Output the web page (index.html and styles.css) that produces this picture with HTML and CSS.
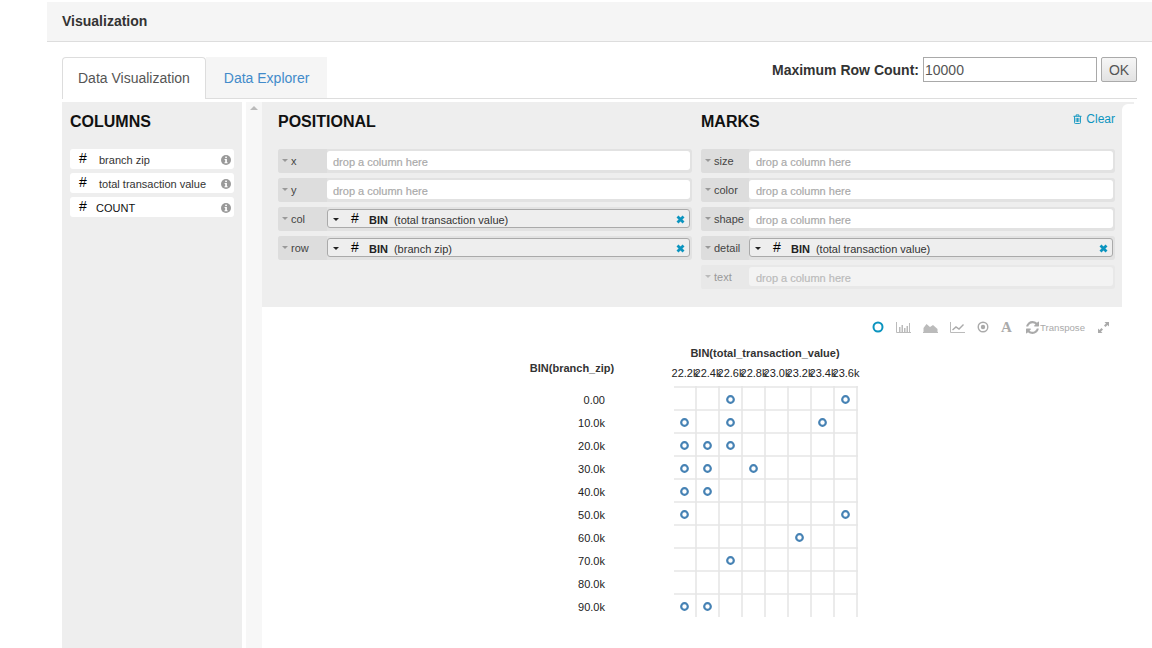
FILE: index.html
```html
<!DOCTYPE html>
<html>
<head>
<meta charset="utf-8" />
<title>Visualization</title>
<link rel="stylesheet" href="styles.css">
</head>
<body>
	<!-- shared icons -->
	<svg class="icon-defs" aria-hidden="true">
		<symbol id="i-info" viewBox="0 0 10 10">
			<circle cx="5" cy="5" r="5" fill="#999"/>
			<rect x="4.200" y="1.600" width="1.700" height="1.500" fill="#fff"/>
			<path d="M3.600 4h2.300v3.200h.7v1H3.500v-1h.7V5h-.6z" fill="#fff"/>
		</symbol>
		<symbol id="i-x" viewBox="0 0 9 9">
			<path d="M1.500 1.500l6 6M7.500 1.500l-6 6" stroke="#0b94bf" stroke-width="2.800" fill="none"/>
		</symbol>
	</svg>

	<div class="panel-head">Visualization</div>

	<div class="content">
		<div class="tabs-row">
			<div class="tabs">
				<a class="tab tab-active">Data Visualization</a>
				<a class="tab">Data Explorer</a>
			</div>
			<div class="row-count">
				<label>Maximum Row Count:</label>
				<input type="text" value="10000">
				<button>OK</button>
			</div>
		</div>

		<div class="workspace">
			<div class="columns">
				<h2>COLUMNS</h2>
				<div class="col-item"><span class="hash">#</span><span class="col-name">branch zip</span><svg class="info"><use href="#i-info"/></svg></div>
				<div class="col-item"><span class="hash">#</span><span class="col-name">total transaction value</span><svg class="info"><use href="#i-info"/></svg></div>
				<div class="col-item"><span class="hash">#</span><span class="col-name col-count">COUNT</span><svg class="info"><use href="#i-info"/></svg></div>
			</div>

			<div class="scroll-strip"><span class="scroll-up"></span></div>

			<div class="main">
				<div class="encoding-wrap">
					<div class="encoding">
						<div class="enc-group positional">
							<h2>POSITIONAL</h2>
							<div class="shelf">
								<span class="shelf-label"><i class="caret"></i>x</span>
								<span class="field">drop a column here</span>
							</div>
							<div class="shelf">
								<span class="shelf-label"><i class="caret"></i>y</span>
								<span class="field">drop a column here</span>
							</div>
							<div class="shelf">
								<span class="shelf-label"><i class="caret"></i>col</span>
								<span class="field field-set"><i class="caret caret-dark"></i><span class="hash">#</span><b>BIN</b><span>(total transaction value)</span><svg class="remove"><use href="#i-x"/></svg></span>
							</div>
							<div class="shelf">
								<span class="shelf-label"><i class="caret"></i>row</span>
								<span class="field field-set"><i class="caret caret-dark"></i><span class="hash">#</span><b>BIN</b><span>(branch zip)</span><svg class="remove"><use href="#i-x"/></svg></span>
							</div>
						</div>
						<div class="enc-group marks">
							<div class="marks-head">
								<h2>MARKS</h2>
								<a class="clear">
									<svg class="trash" viewBox="0 0 10 11"><path d="M.5 2.500h9M3.500 2.500V.9h3v1.600M1.700 2.500v7.100q0 .9.9.9h4.800q.9 0 .9-.9V2.500M3.500 4.300v4.500M5 4.300v4.500M6.500 4.300v4.500" fill="none" stroke="#0b94bf"/></svg>Clear
								</a>
							</div>
							<div class="shelf">
								<span class="shelf-label"><i class="caret"></i>size</span>
								<span class="field">drop a column here</span>
							</div>
							<div class="shelf">
								<span class="shelf-label"><i class="caret"></i>color</span>
								<span class="field">drop a column here</span>
							</div>
							<div class="shelf">
								<span class="shelf-label"><i class="caret"></i>shape</span>
								<span class="field">drop a column here</span>
							</div>
							<div class="shelf">
								<span class="shelf-label"><i class="caret"></i>detail</span>
								<span class="field field-set"><i class="caret caret-dark"></i><span class="hash">#</span><b>BIN</b><span>(total transaction value)</span><svg class="remove"><use href="#i-x"/></svg></span>
							</div>
							<div class="shelf shelf-off">
								<span class="shelf-label"><i class="caret"></i>text</span>
								<span class="field">drop a column here</span>
							</div>
						</div>
					</div>
					<div class="encoding-corner"></div>
				</div>

				<div class="toolbar">
					<svg class="tool t-point" viewBox="0 0 12 12"><circle cx="6" cy="6" r="4.500" fill="none" stroke="#0b94bf" stroke-width="2"/></svg>
					<svg class="tool t-chart" viewBox="0 0 15 11"><path d="M.5 0v10.500H15" fill="none" stroke="#bbb"/><path d="M3 5h1.500v5H3zM5.500 3H7v7H5.500zM8 6h1.500v4H8zM10.500 4H12v6h-1.500zM13 1h1v9h-1z" fill="#bbb"/></svg>
					<svg class="tool t-chart" viewBox="0 0 15 11"><path d="M0 10.500h15" stroke="#bbb" fill="none"/><path d="M.5 10V6l3-4 3.500 3 3-2 4.500 4v3z" fill="#bbb"/></svg>
					<svg class="tool t-chart" viewBox="0 0 15 11"><path d="M.5 0v10.500H15" fill="none" stroke="#bbb"/><path d="M2.500 8l3.500-3 3 2 4.500-4.500" fill="none" stroke="#aaa" stroke-width="1.400"/></svg>
					<svg class="tool t-dot" viewBox="0 0 12 12"><circle cx="6" cy="6" r="4.800" fill="none" stroke="#aaa" stroke-width="1.400"/><circle cx="6" cy="6" r="2.200" fill="#aaa"/></svg>
					<span class="t-text">A</span>
					<span class="transpose">
						<svg class="t-refresh" viewBox="0 0 1536 1536"><path fill="#aaa" d="M1511 928q0 5-1 7-64 268-268 434.500t-478 166.500q-146 0-282.500-55t-243.500-157l-129 129q-19 19-45 19t-45-19-19-45v-448q0-26 19-45t45-19h448q26 0 45 19t19 45-19 45l-137 137q71 66 161 102t187 36q134 0 250-65t186-179q11-17 53-117 8-23 30-23h192q13 0 22.500 9.500t9.500 22.500zm25-800v448q0 26-19 45t-45 19h-448q-26 0-45-19t-19-45 19-45l138-138q-148-137-349-137-134 0-250 65t-186 179q-11 17-53 117-8 23-30 23h-199q-13 0-22.500-9.500t-9.500-22.500v-7q65-268 270-434.500t480-166.500q146 0 284 55.500t245 156.500l130-129q19-19 45-19t45 19 19 45z"/></svg>Transpose
					</span>
					<svg class="tool t-expand" viewBox="0 0 11 11"><path d="M6.500 0H11v4.500L9.500 3 7.500 5 6 3.500l2-2zM4.500 11H0V6.500L1.500 8l2-2L5 7.500l-2 2z" fill="#aaa"/></svg>
				</div>

				<svg class="chart" width="340" height="280">
					<path class="grid" d="M154 47H338M154 70H338M154 93H338M154 116H338M154 139H338M154 162H338M154 185H338M154 208H338M154 231H338M154 254H338M176 46V277M199 46V277M222 46V277M245 46V277M268 46V277M291 46V277M314 46V277M337 46V277"/>

					<text class="axis-title" x="245" y="17" text-anchor="middle">BIN(total_transaction_value)</text>
					<text class="axis-title" x="52" y="32" text-anchor="middle">BIN(branch_zip)</text>

					<g class="tick" text-anchor="middle">
						<text x="165" y="37">22.2k</text>
						<text x="188" y="37">22.4k</text>
						<text x="211" y="37">22.6k</text>
						<text x="234" y="37">22.8k</text>
						<text x="257" y="37">23.0k</text>
						<text x="280" y="37">23.2k</text>
						<text x="303" y="37">23.4k</text>
						<text x="326" y="37">23.6k</text>
					</g>
					<g class="tick" text-anchor="end">
						<text x="85" y="64">0.00</text>
						<text x="85" y="87">10.0k</text>
						<text x="85" y="110">20.0k</text>
						<text x="85" y="133">30.0k</text>
						<text x="85" y="156">40.0k</text>
						<text x="85" y="179">50.0k</text>
						<text x="85" y="202">60.0k</text>
						<text x="85" y="225">70.0k</text>
						<text x="85" y="248">80.0k</text>
						<text x="85" y="271">90.0k</text>
					</g>

					<g class="points">
						<circle cx="210.500" cy="59.500" r="3.300"/><circle cx="325.500" cy="59.500" r="3.300"/>
						<circle cx="164.500" cy="82.500" r="3.300"/><circle cx="210.500" cy="82.500" r="3.300"/><circle cx="302.500" cy="82.500" r="3.300"/>
						<circle cx="164.500" cy="105.500" r="3.300"/><circle cx="187.500" cy="105.500" r="3.300"/><circle cx="210.500" cy="105.500" r="3.300"/>
						<circle cx="164.500" cy="128.500" r="3.300"/><circle cx="187.500" cy="128.500" r="3.300"/><circle cx="233.500" cy="128.500" r="3.300"/>
						<circle cx="164.500" cy="151.500" r="3.300"/><circle cx="187.500" cy="151.500" r="3.300"/>
						<circle cx="164.500" cy="174.500" r="3.300"/><circle cx="325.500" cy="174.500" r="3.300"/>
						<circle cx="279.500" cy="197.500" r="3.300"/>
						<circle cx="210.500" cy="220.500" r="3.300"/>
						<circle cx="164.500" cy="266.500" r="3.300"/><circle cx="187.500" cy="266.500" r="3.300"/>
					</g>
				</svg>
			</div>
		</div>
	</div>
</body>
</html>
```

FILE: styles.css
```css
html, body {
	margin: 0;
	height: 648px;
	overflow: hidden;
	background: #fff;
}
body {
	padding-top: 2px;
	box-sizing: border-box;
	font-family: "Liberation Sans", Arial, sans-serif;
	font-size: 11px;
	color: #333;
}
.icon-defs {
	display: none;
}

h2 {
	margin: 0;
	height: 38px;
	line-height: 40px;
	font-size: 16px;
	font-weight: bold;
	color: #111;
}

/* Header */
.panel-head {
	margin-left: 47px;
	height: 39px;
	line-height: 38px;
	padding-left: 15px;
	background: #f5f5f5;
	border-bottom: 1px solid #ddd;
	font-size: 14px;
	font-weight: bold;
}

.content {
	padding: 15px 15px 0 62px;
}

/* Tabs */
.tabs-row {
	display: flex;
	justify-content: space-between;
	height: 41px;
	border-bottom: 1px solid #ddd;
}
.tabs {
	display: flex;
}
.tab {
	height: 41px;
	line-height: 42px;
	padding: 0 18px;
	font-size: 14px;
	color: #428bca;
	background: #f5f5f5;
}
.tab-active {
	box-sizing: border-box;
	height: 42px;
	line-height: 40px;
	padding: 0 15px;
	color: #555;
	background: #fff;
	border: 1px solid #ddd;
	border-bottom: 0;
	border-radius: 4px 4px 0 0;
}
.row-count {
	display: flex;
	align-items: flex-start;
	font-size: 14px;
}
.row-count label {
	line-height: 26px;
	margin-right: 4px;
	font-weight: bold;
}
.row-count input {
	box-sizing: border-box;
	width: 174px;
	height: 25px;
	margin: 0 4px 0 0;
	padding: 0 1px;
	border: 1px solid #a9a9a9;
	font: 14px "Liberation Sans", Arial, sans-serif;
	color: #555;
}
.row-count button {
	box-sizing: border-box;
	width: 36px;
	height: 25px;
	padding: 0;
	border: 1px solid #aaa;
	border-radius: 2px;
	background: linear-gradient(#f6f6f6, #e2e2e2);
	font: 14px "Liberation Sans", Arial, sans-serif;
	color: #555;
}

/* Main area */
.workspace {
	display: flex;
	margin-top: 3px;
	height: 546px;
}

.columns {
	box-sizing: border-box;
	width: 180px;
	padding: 0 8px;
	background: #eee;
}
.columns h2 {
	margin-bottom: 9px;
}
.col-item {
	display: flex;
	align-items: center;
	box-sizing: border-box;
	height: 20px;
	margin-bottom: 4px;
	padding: 2px 3px 0 9px;
	background: #fff;
	border-radius: 3px;
	color: #333;
}
.hash {
	position: relative;
	top: -2px;
	width: 20px;
	font-size: 14px;
	color: #000;
}
.col-name {
	flex: 1;
}
.col-count {
	margin-left: -3px;
	color: #111;
}
.info {
	width: 10px;
	height: 10px;
}

.scroll-strip {
	position: relative;
	width: 16px;
	margin-left: 4px;
	background: #f7f7f7;
}
.scroll-up {
	position: absolute;
	top: 4px;
	left: 4px;
	border: 4px solid transparent;
	border-top: 0;
	border-bottom: 4px solid #bbb;
}

.main {
	flex: 1;
	margin-right: -15px;
}
.encoding-wrap {
	display: flex;
	width: 872px;
	background: #eee;
}
.encoding {
	display: flex;
	gap: 9px;
	box-sizing: border-box;
	width: 860px;
	height: 205px;
	padding: 0 7px 0 16px;
}
.encoding-corner {
	flex: 1;
	margin-top: 2px;
	background: #fff;
	border-top-left-radius: 6px;
}
.enc-group {
	width: 414px;
}
.enc-group h2 {
	margin-bottom: 9px;
}
.marks-head {
	display: flex;
	justify-content: space-between;
}
.clear {
	display: flex;
	align-items: center;
	height: 14px;
	margin-top: 10px;
	font-size: 12px;
	color: #0b94bf;
}
.trash {
	width: 9px;
	height: 10px;
	margin-right: 4px;
}

/* Shelves */
.shelf {
	display: flex;
	height: 24px;
	margin-bottom: 5px;
	background: #e2e2e2;
	border-radius: 3px;
}
.shelf-label {
	display: flex;
	align-items: center;
	box-sizing: border-box;
	width: 49px;
	padding: 0 0 1px 4px;
	color: #444;
	background: #ddd;
	border-radius: 3px 0 0 3px;
}
.marks .shelf-label {
	width: 48px;
}
.caret {
	width: 0;
	height: 0;
	margin-right: 3px;
	border: 3px solid transparent;
	border-top: 3px solid #999;
	border-bottom: 0;
}
.caret-dark {
	border-top-color: #222;
	margin-right: 12px;
}
.field {
	flex: 1;
	display: flex;
	align-items: center;
	box-sizing: border-box;
	margin: 2px 2px 3px 0;
	padding: 2px 6px 0;
	background: #fff;
	border-radius: 3px;
	color: #aaa;
	font-size: 11px;
	-webkit-text-stroke: .2px #aaa;
}
.marks .field {
	padding-left: 7px;
}
.marks .field-set,
.field-set {
	background: #eee;
	border: 1px solid #aaa;
	padding: 2px 4px 0 5px;
	color: #333;
	-webkit-text-stroke: 0;
}
.field-set .hash {
	width: 18px;
}
.field-set b {
	margin-right: 6px;
	color: #222;
}
.remove {
	width: 9px;
	height: 9px;
	margin-left: auto;
}
.shelf-off {
	background: #e8e8e8;
}
.shelf-off .shelf-label {
	background: #e8e8e8;
	color: #999;
}
.shelf-off .caret {
	border-top-color: #bbb;
}
.shelf-off .field {
	background: #f3f3f3;
	color: #bbb;
	-webkit-text-stroke: .2px #bbb;
}

/* Chart toolbar */
.toolbar {
	display: flex;
	align-items: center;
	justify-content: flex-end;
	box-sizing: border-box;
	height: 33px;
	width: 847px;
	padding-top: 7px;
}
.tool {
	display: block;
}
.t-point {
	width: 12px;
	height: 12px;
	margin-right: 12px;
}
.t-chart {
	width: 15px;
	height: 11px;
	margin-right: 12px;
}
.t-dot {
	width: 12px;
	height: 12px;
	margin-right: 12px;
}
.t-text {
	width: 12px;
	margin-right: 13px;
	font: bold 15px "Liberation Serif", serif;
	color: #aaa;
}
.transpose {
	display: flex;
	align-items: center;
	margin-right: 13px;
	font-size: 9.6px;
	color: #aaa;
}
.t-refresh {
	width: 13px;
	height: 13px;
	margin-right: 1px;
}
.t-expand {
	width: 11px;
	height: 11px;
}

/* Chart */
.chart {
	display: block;
	margin-left: 258px;
	font-size: 11px;
	overflow: visible;
}
.grid {
	fill: none;
	stroke: #e6e6e6;
	stroke-width: 1.600;
}
.axis-title {
	font-weight: bold;
	fill: #333;
}
.tick {
	fill: #222;
}
.points circle {
	fill: #fff;
	stroke: #4682b4;
	stroke-width: 2.200;
}
```
